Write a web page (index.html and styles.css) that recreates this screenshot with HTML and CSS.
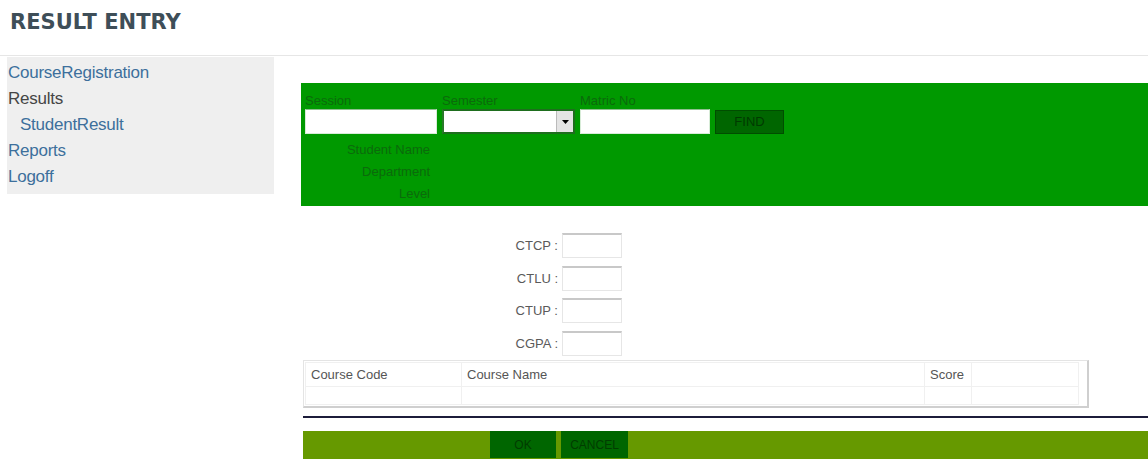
FILE: index.html
```html
<!DOCTYPE html>
<html lang="en">
<head>
<meta charset="utf-8">
<title>Result Entry</title>
<link rel="stylesheet" href="styles.css">
</head>
<body>
<header class="page-head">
  <h1 class="page-title">RESULT ENTRY</h1>
</header>
<div class="layout">
  <nav class="sidebar">
    <a class="nav-link" href="#">CourseRegistration</a>
    <span class="nav-group">Results</span>
    <a class="nav-link nav-sub" href="#">StudentResult</a>
    <a class="nav-link" href="#">Reports</a>
    <a class="nav-link" href="#">Logoff</a>
  </nav>
  <main class="content">
    <section class="search-panel">
      <label class="field-label">Session</label>
      <label class="field-label">Semester</label>
      <label class="field-label">Matric No</label>
      <span></span>
      <input class="text-box" type="text">
      <div class="select-box"><span class="select-arrow"><svg width="7" height="4" viewBox="0 0 7 4"><path d="M0 0h7L3.5 4z" fill="#000"/></svg></span></div>
      <input class="text-box" type="text">
      <button class="btn-find" type="button">FIND</button>
      <span class="info-label info-name">Student Name</span>
      <span class="info-label info-dept">Department</span>
      <span class="info-label info-level">Level</span>
    </section>

    <section class="totals">
      <span class="total-label">CTCP :</span><input class="total-box" type="text">
      <span class="total-label">CTLU :</span><input class="total-box" type="text">
      <span class="total-label">CTUP :</span><input class="total-box" type="text">
      <span class="total-label">CGPA :</span><input class="total-box" type="text">
    </section>

    <div class="grid-wrap">
      <table class="course-grid">
        <tr class="grid-head">
          <td class="col-code">Course Code</td>
          <td class="col-name">Course Name</td>
          <td class="col-score">Score</td>
          <td class="col-extra"></td>
        </tr>
        <tr class="grid-row">
          <td></td><td></td><td></td><td></td>
        </tr>
      </table>
    </div>

    <hr class="rule">

    <div class="action-bar">
      <button class="btn-action btn-ok" type="button">OK</button>
      <button class="btn-action btn-cancel" type="button">CANCEL</button>
    </div>
  </main>
</div>
</body>
</html>
```

FILE: styles.css
```css
html, body {
  margin: 0;
  padding: 0;
  background: #ffffff;
}

body {
  font-family: "Liberation Sans", Arial, sans-serif;
  color: #555;
}

/* page heading */
.page-head {
  padding: 10px 0 0 10px;
  border-bottom: 1px solid #e6e6e6;
  box-sizing: border-box;
  height: 56px;
}

.page-title {
  margin: 0;
  font-family: "DejaVu Sans", Verdana, sans-serif;
  font-weight: bold;
  font-size: 21px;
  line-height: 24px;
  color: #3e4e58;
}

/* two-column body */
.layout {
  display: flex;
  align-items: flex-start;
  gap: 27px;
  padding-left: 7px;
}

.sidebar {
  width: 267px;
  flex: none;
  margin-top: 1px;
  padding: 3px 0 4px 1px;
  box-sizing: border-box;
  background: #efefef;
  display: flex;
  flex-direction: column;
}

.nav-link,
.nav-group {
  font-size: 17px;
  line-height: 26px;
  letter-spacing: -0.25px;
  text-decoration: none;
}

.nav-link {
  color: #3d6f9c;
}

.nav-group {
  color: #454545;
}

.nav-sub {
  padding-left: 12px;
}

.content {
  flex: 1;
  padding-top: 27px;
  min-width: 0;
}

/* green search panel */
.search-panel {
  background: #009900;
  display: grid;
  grid-template-columns: 132px 133px 130px 69px;
  grid-template-rows: 20px 25px 4px 22px 22px 22px;
  column-gap: 5px;
  padding: 6px 0 2px 4px;
  box-sizing: border-box;
  height: 123px;
  align-items: center;
}

.field-label {
  font-size: 13px;
  color: #0b6a0b;
  align-self: end;
  padding-bottom: 1px;
}

.text-box {
  box-sizing: border-box;
  width: 100%;
  height: 25px;
  margin: 0;
  border: 1px solid #d8ecd8;
  border-top-color: #8fbf8f;
  background: #fff;
  padding: 0;
}

.select-box {
  box-sizing: border-box;
  height: 25px;
  background: #fff;
  border: 2px solid #1e6e1e;
  border-left-color: #2a7a2a;
  display: flex;
  justify-content: flex-end;
  align-items: stretch;
}

.select-arrow {
  width: 16px;
  background: #e4e4e4;
  border-left: 1px solid #bbb;
  display: flex;
  align-items: center;
  justify-content: center;
}

.btn-find {
  height: 24px;
  margin: 0;
  padding: 0;
  border: 1px solid #004d00;
  background: #006600;
  color: #003a00;
  font-family: "Liberation Sans", Arial, sans-serif;
  font-size: 13px;
  align-self: center;
}

.info-label {
  grid-column: 1;
  justify-self: end;
  padding-right: 7px;
  font-size: 13px;
  color: #0b6a0b;
}

.info-name { grid-row: 4; }
.info-dept { grid-row: 5; }
.info-level { grid-row: 6; }

/* credit totals */
.totals {
  display: grid;
  grid-template-columns: 257px 60px;
  column-gap: 4px;
  row-gap: 7.5px;
  margin-top: 27px;
  align-items: center;
}

.total-label {
  justify-self: end;
  font-size: 13px;
  color: #5a5a5a;
}

.total-box {
  box-sizing: border-box;
  width: 60px;
  height: 25px;
  margin: 0;
  border: 1px solid #e6e6e6;
  border-top: 2px solid #c8c8c8;
  background: #fff;
}

/* course grid */
.grid-wrap {
  margin: 4px 0 0 2px;
  width: 786px;
  box-sizing: border-box;
  border: 1px solid #e4e4e4;
  border-right: 2px solid #cfcfcf;
  border-bottom: 2px solid #cfcfcf;
  padding: 1px 8px 1px 1px;
}

.course-grid {
  width: 100%;
  border-collapse: collapse;
  font-size: 13px;
  color: #555;
}

.course-grid td {
  border: 1px solid #f0f0f0;
  padding: 0 0 0 5px;
}

.grid-head td {
  height: 23px;
}

.grid-row td {
  height: 17px;
}

.col-code { width: 150px; }
.col-name { width: 457px; }
.col-score { width: 41px; }

/* divider */
.rule {
  margin: 8px 0 0 2px;
  border: none;
  height: 2px;
  background: #1c1c3a;
}

/* bottom action bar */
.action-bar {
  margin: 13px 0 0 2px;
  height: 28px;
  background: #669900;
  display: flex;
  align-items: stretch;
  gap: 5px;
  padding-left: 187px;
}

.btn-action {
  margin: 0;
  padding: 0;
  border: none;
  background: #006600;
  color: #003c00;
  font-family: "Liberation Sans", Arial, sans-serif;
  font-size: 12px;
  height: 27px;
  align-self: center;
}

.btn-ok { width: 66px; }
.btn-cancel { width: 67px; }
```
